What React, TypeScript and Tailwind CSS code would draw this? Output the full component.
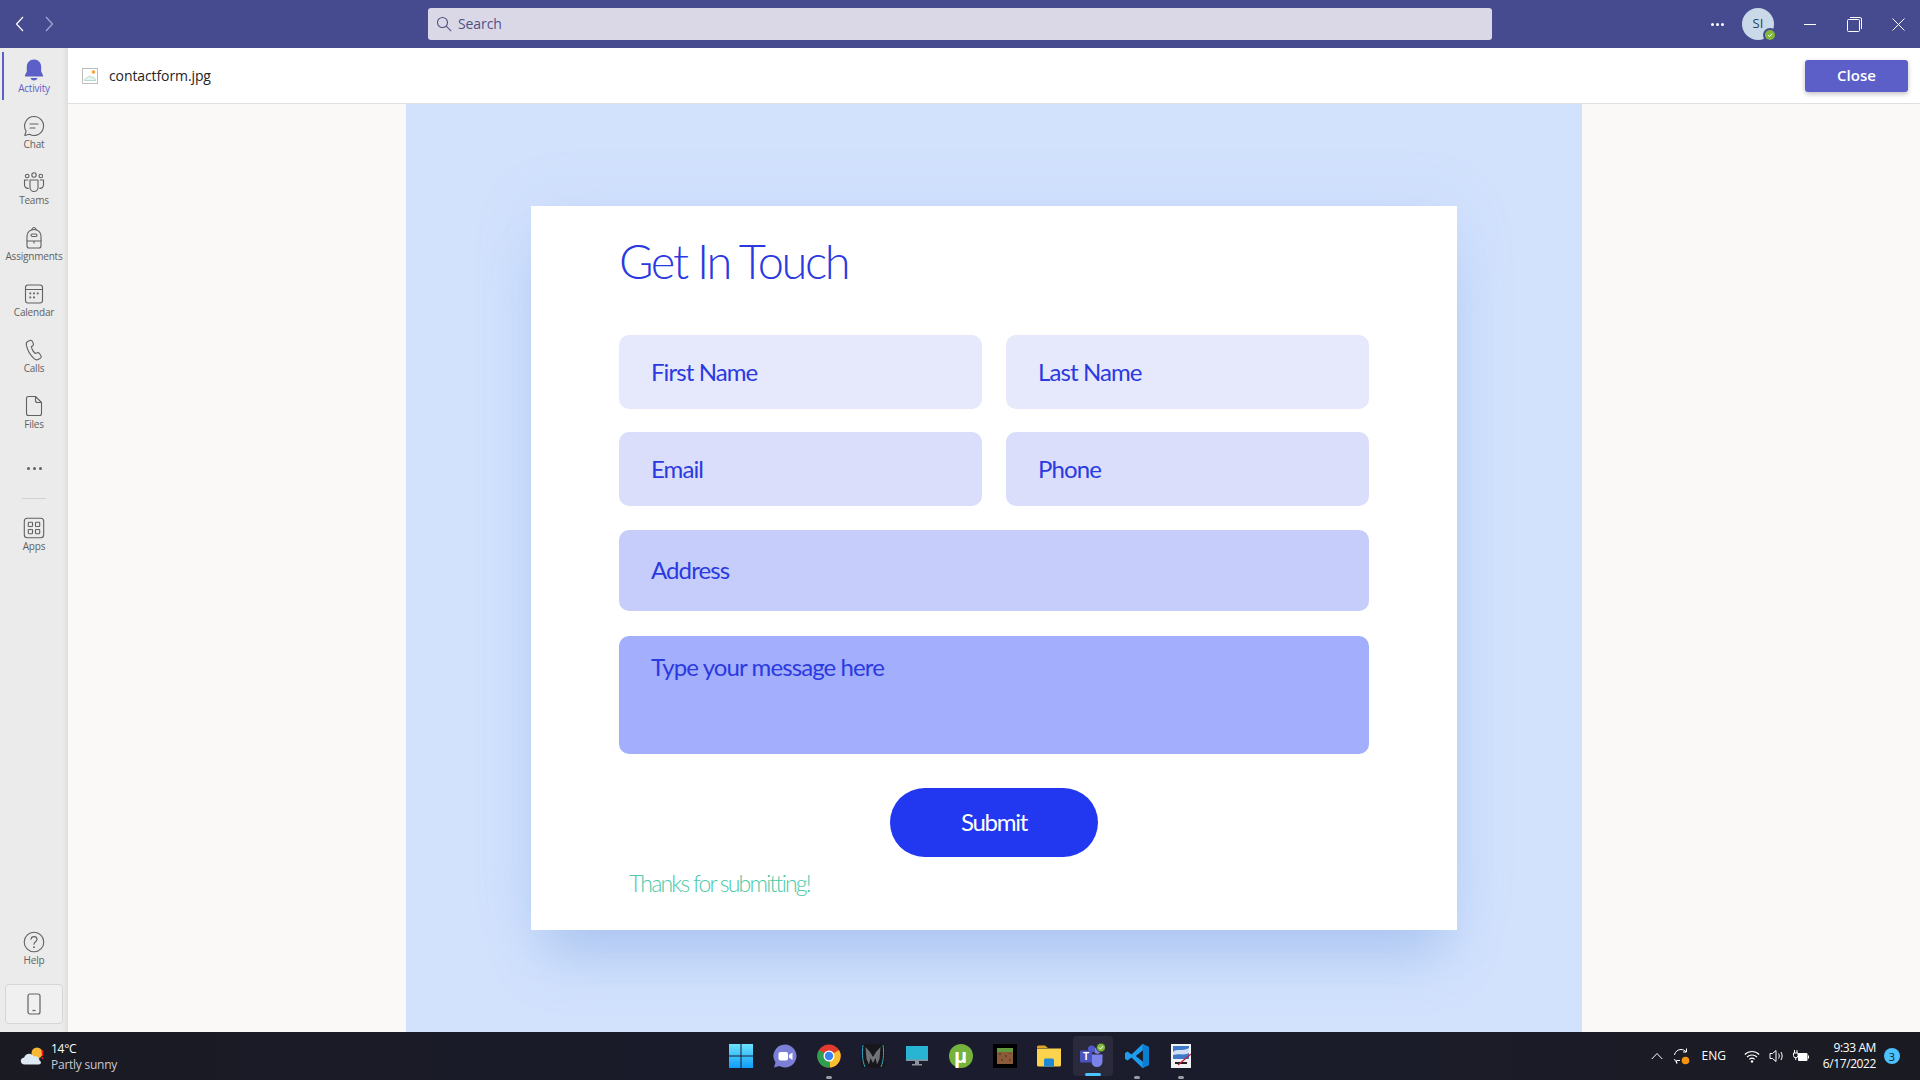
import { ReactNode } from "react";

const stroke = { fill: "none", stroke: "#616161", strokeWidth: 1.1, strokeLinecap: "round", strokeLinejoin: "round" } as const;

function Ico({ children, size = 24 }: { children: ReactNode; size?: number }) {
  return (
    <svg width={size} height={size} viewBox="0 0 24 24" className="block">
      {children}
    </svg>
  );
}

const railIcons: Record<string, ReactNode> = {
  Activity: (
    <Ico>
      <path d="M12 1.500c-4.400 0-7.200 3.400-7.200 7.400v4.600L3 17.200c-.3.700.1 1.300.9 1.300h16.200c.8 0 1.200-.6.900-1.300l-1.800-3.700V8.900c0-4-2.800-7.400-7.200-7.400Z" fill="#5b5fc7" />
      <path d="M8.500 20h7c-.3 1.500-1.700 2.500-3.500 2.500S8.800 21.500 8.500 20Z" fill="#5b5fc7" />
    </Ico>
  ),
  Chat: (
    <Ico>
      <path {...stroke} d="M12 2.500a9.500 9.500 0 1 1-4.600 17.800L2.800 21.500l1.300-4.400A9.500 9.500 0 0 1 12 2.500Z" />
      <path {...stroke} d="M8 10h8M8 14h5" />
    </Ico>
  ),
  Teams: (
    <Ico>
      <g {...stroke}>
        <circle cx="12" cy="5" r="2.200" />
        <circle cx="5.200" cy="6" r="1.800" />
        <circle cx="18.800" cy="6" r="1.800" />
        <path d="M8 10h8v7.500a4 4 0 0 1-8 0Z" />
        <path d="M5.800 10H2.500v5a3.500 3.500 0 0 0 3.800 3.400M18.200 10h3.300v5a3.500 3.500 0 0 1-3.800 3.400" />
      </g>
    </Ico>
  ),
  Assignments: (
    <Ico>
      <g {...stroke}>
        <path d="M9.800 3.800C10 2.500 11 1.500 12 1.500s2 1 2.200 2.300" />
        <path d="M5 10c0-3.800 3-6.500 7-6.500s7 2.700 7 6.500v10a2 2 0 0 1-2 2H7a2 2 0 0 1-2-2Z" />
        <path d="M5 15h14M12 15v2" />
        <rect x="9" y="8" width="6" height="2.500" rx="1.200" />
      </g>
    </Ico>
  ),
  Calendar: (
    <Ico>
      <rect {...stroke} x="3.500" y="3" width="17" height="18" rx="2.500" />
      <path {...stroke} d="M3.500 7.500h17" />
      <g fill="#616161">
        <rect x="7.400" y="10.500" width="1.800" height="1.800" />
        <rect x="11.100" y="10.500" width="1.800" height="1.800" />
        <rect x="14.800" y="10.500" width="1.800" height="1.800" />
        <rect x="7.400" y="14.500" width="1.800" height="1.800" />
        <rect x="11.100" y="14.500" width="1.800" height="1.800" />
      </g>
    </Ico>
  ),
  Calls: (
    <Ico>
      <path {...stroke} d="M7.800 2.600 5.700 3.500C4.300 4.200 4 5.600 4.400 7.300c1.100 4.800 4.100 10 7.700 13.300 1.300 1.200 2.700 1.600 4 .9l2.200-1.200c1-.6 1.200-1.700.6-2.600l-1.500-2.200c-.6-.8-1.500-1.100-2.400-.7l-1.800.7C11 13.500 9.800 11.300 9.300 8.800l1.400-1c.8-.6 1-1.500.6-2.400l-1-2.100c-.4-.9-1.500-1.200-2.500-.7Z" />
    </Ico>
  ),
  Files: (
    <Ico>
      <path {...stroke} d="M6.500 2.500h7l6 6v11a2 2 0 0 1-2 2h-11a2 2 0 0 1-2-2v-15a2 2 0 0 1 2-2Z" />
      <path {...stroke} d="M13.500 2.500v4a2 2 0 0 0 2 2h4" />
    </Ico>
  ),
  Apps: (
    <Ico>
      <rect {...stroke} x="2.300" y="2.300" width="19.400" height="19.400" rx="3" />
      <rect {...stroke} x="6.300" y="6.300" width="4.200" height="4.200" rx=".6" />
      <rect {...stroke} x="13.500" y="6.300" width="4.200" height="4.200" rx=".6" />
      <rect {...stroke} x="6.300" y="13.500" width="4.200" height="4.200" rx=".6" />
      <rect {...stroke} x="13.500" y="13.500" width="4.200" height="4.200" rx=".6" />
    </Ico>
  ),
  Help: (
    <Ico>
      <circle {...stroke} cx="12" cy="12" r="9.800" />
      <path {...stroke} d="M9 9.300c.2-1.700 1.400-2.700 3-2.700s3 1.100 3 2.700c0 2.400-3 2.500-3 5" />
      <circle cx="12" cy="17.200" r=".9" fill="#616161" />
    </Ico>
  ),
};

function RailItem({ label, active }: { label: string; active?: boolean }) {
  return (
    <div className="relative h-[48px] flex flex-col items-center">
      {active && <div className="absolute left-[2px] top-0 h-[48px] w-[2px] bg-[#5b5fc7]" />}
      <div className="mt-[6px] h-[24px]">{railIcons[label]}</div>
      <div className={`text-[10px] leading-[13px] tracking-[-0.2px] ${active ? "text-[#5b5fc7]" : "text-[#616161]"}`}>{label}</div>
    </div>
  );
}

function Rail() {
  return (
    <div className="w-[68px] shrink-0 flex flex-col items-stretch bg-[#ebebeb] pt-[4px] shadow-[inset_-5px_0_4px_-3px_rgba(0,0,0,0.07)]">
      <div className="flex flex-col gap-[8px]">
        <RailItem label="Activity" active />
        <RailItem label="Chat" />
        <RailItem label="Teams" />
        <RailItem label="Assignments" />
        <RailItem label="Calendar" />
        <RailItem label="Calls" />
        <RailItem label="Files" />
      </div>
      <div className="h-[56px] flex items-center justify-center gap-[3px] pt-[8px]">
        <span className="w-[3px] h-[3px] rounded-full bg-[#616161]" />
        <span className="w-[3px] h-[3px] rounded-full bg-[#616161]" />
        <span className="w-[3px] h-[3px] rounded-full bg-[#616161]" />
      </div>
      <div className="mx-auto mt-[6px] mb-[11px] w-[24px] h-px bg-[#d1d1d1]" />
      <RailItem label="Apps" />
      <div className="mt-auto">
        <RailItem label="Help" />
      </div>
      <div className="mx-[5px] mt-[12px] mb-[8px] h-[40px] rounded-[4px] border border-[#d6d6d6] bg-[#f0f0f0] flex items-center justify-center">
        <svg width="14" height="22" viewBox="0 0 14 22">
          <rect x="1" y="1" width="12" height="20" rx="2" fill="none" stroke="#616161" strokeWidth="1.200" />
          <path d="M5.500 17.500h3" stroke="#616161" strokeWidth="1.200" />
        </svg>
      </div>
    </div>
  );
}

function TitleBar() {
  return (
    <div className="h-[48px] shrink-0 bg-[#464a8f] flex items-center">
      <div className="w-[428px] flex items-center pl-[15px] gap-[19px]">
        <svg width="10" height="16" viewBox="0 0 10 16">
          <path d="M8 1 1.500 8 8 15" fill="none" stroke="#fff" strokeWidth="1.200" />
        </svg>
        <svg width="10" height="16" viewBox="0 0 10 16">
          <path d="M2 1 8.500 8 2 15" fill="none" stroke="#a6a8d2" strokeWidth="1.200" />
        </svg>
      </div>
      <div className="w-[1064px] h-[32px] rounded-[3px] bg-[#dad8e6] flex items-center pl-[8px] gap-[6px] text-[14px] leading-[30px] pb-[1px] text-[#505184] tracking-[-0.1px]">
        <svg width="16" height="16" viewBox="0 0 16 16">
          <circle cx="6.500" cy="6.500" r="5" fill="none" stroke="#505184" strokeWidth="1.100" />
          <path d="m10.200 10.200 5 5" stroke="#505184" strokeWidth="1.100" />
        </svg>
        <span>Search</span>
      </div>
      <div className="flex-1 flex items-center">
        <div className="ml-[219px] flex gap-[2px]">
          <span className="w-[3px] h-[3px] rounded-full bg-white" />
          <span className="w-[3px] h-[3px] rounded-full bg-white" />
          <span className="w-[3px] h-[3px] rounded-full bg-white" />
        </div>
        <div className="relative ml-[18px] w-[32px] h-[32px] rounded-full bg-[#c9d9e8] flex items-center justify-center text-[13px] font-medium text-[#24425f]">
          SI
          <div className="absolute right-[-3px] bottom-[-2px] w-[14px] h-[14px] rounded-full bg-[#83b93b] border-2 border-[#464a8f] flex items-center justify-center">
            <svg width="6" height="6" viewBox="0 0 6 6">
              <path d="m1 3 1.500 1.500L5 1.700" fill="none" stroke="#fff" strokeWidth="1" />
            </svg>
          </div>
        </div>
        <div className="ml-[30px] w-[12px] h-px bg-white" />
        <svg className="ml-[31px]" width="15" height="15" viewBox="0 0 15 15">
          <rect x=".5" y="2.500" width="12" height="12" rx="1" fill="none" stroke="#fff" />
          <path d="M3 .5h10a1.500 1.500 0 0 1 1.500 1.500v10" fill="none" stroke="#fff" />
        </svg>
        <svg className="ml-[30px]" width="13" height="13" viewBox="0 0 13 13">
          <path d="m.5.5 12 12m0-12-12 12" stroke="#fff" />
        </svg>
      </div>
    </div>
  );
}

function FileBar() {
  return (
    <div className="h-[56px] shrink-0 bg-white border-b border-[#e0e0e0] flex items-center pl-[14px] pr-[12px]">
      <svg width="16" height="16" viewBox="0 0 16 16">
        <rect x=".5" y=".5" width="15" height="15" fill="#fff" stroke="#bdbdbd" />
        <path d="M2.500 12.500c0-1.800 1.300-2.600 2.500-2.500.6-1.700 3.500-2.500 4.700-.7 1.700-.4 3.800.7 3.800 3.200Z" fill="#e5f2ed" stroke="#a9cfc3" strokeWidth=".8" />
        <circle cx="11.500" cy="4" r="1.800" fill="#f7a335" />
      </svg>
      <span className="ml-[11px] text-[14px] font-medium text-[#252424] tracking-[-0.1px]">contactform.jpg</span>
      <button className="ml-auto w-[103px] h-[32px] rounded-[3px] bg-[#5b5fc7] text-white text-[15px] font-semibold shadow-[0_2px_5px_rgba(0,0,0,0.25)]">
        Close
      </button>
    </div>
  );
}

function Field({ label, cls }: { label: string; cls: string }) {
  return (
    <div className={`rounded-[10px] flex pl-[32px] text-[24px] leading-none text-[#2b3ae0] tracking-[-0.9px] ${cls}`}>
      {label}
    </div>
  );
}

function ContactForm() {
  return (
    <div className="w-[1176px] h-full bg-[#d2e2fd] pt-[102px] overflow-hidden">
      <div className="mx-auto w-[926px] h-[724px] bg-white px-[88px] shadow-[0_40px_50px_-14px_rgba(120,160,225,0.38),0_0_60px_rgba(120,160,225,0.12)]">
        <div className="h-[129px] pt-[26px] text-[47px] leading-[58px] font-light text-[#2b3ae0] tracking-[-2.4px]">Get In Touch</div>
        <div className="grid grid-cols-[363px_363px] gap-x-[24px]">
          <Field label="First Name" cls="h-[74px] items-center bg-[#e6e8fc]" />
          <Field label="Last Name" cls="h-[74px] items-center bg-[#e6e8fc]" />
          <Field label="Email" cls="mt-[23px] h-[74px] items-center bg-[#dadefb]" />
          <Field label="Phone" cls="mt-[23px] h-[74px] items-center bg-[#dadefb]" />
          <Field label="Address" cls="col-span-2 mt-[24px] h-[81px] items-center pb-[2px] bg-[#c6cdfb]" />
          <Field label="Type your message here" cls="col-span-2 mt-[25px] h-[118px] pt-[19px] bg-[#a3aefc]" />
        </div>
        <div className="flex justify-center mt-[34px]">
          <button className="w-[208px] h-[69px] pb-[2px] rounded-full bg-[#2138f0] text-white text-[24px] tracking-[-1.3px]">Submit</button>
        </div>
        <div className="mt-[8px] pl-[10px] text-[23px] leading-[36px] font-light text-[#4cc9a6] tracking-[-1.8px]">Thanks for submitting!</div>
      </div>
    </div>
  );
}

function TaskIcon({ children, dot, active }: { children: ReactNode; dot?: boolean; active?: boolean }) {
  return (
    <div className="relative w-[44px] h-[48px] flex items-center justify-center">
      {active && <div className="absolute left-[2px] top-[4px] w-[40px] h-[40px] rounded-[4px] bg-[#2a2a3c]" />}
      <div className="relative">{children}</div>
      {dot && <div className="absolute bottom-[1px] left-1/2 -translate-x-1/2 w-[6px] h-[3px] rounded-full bg-[#9a9aa2]" />}
      {active && <div className="absolute bottom-[4px] left-1/2 -translate-x-1/2 w-[16px] h-[3px] rounded-full bg-[#4cc2ff]" />}
    </div>
  );
}

function Taskbar() {
  return (
    <div className="h-[48px] shrink-0 bg-linear-to-r from-[#191a22] via-[#1b1c2e] to-[#1a1b22] grid grid-cols-[1fr_auto_1fr] items-center text-white">
      <div className="flex items-center pl-[20px] gap-[7px]">
        <svg width="24" height="20" viewBox="0 0 24 20">
          <circle cx="17" cy="7" r="5.500" fill="#f7b733" />
          <path d="M21.500 4h2l-.5 6h-1Z" fill="#e81123" />
          <circle cx="22.300" cy="12" r="1" fill="#e81123" />
          <path d="M5 18.500c-5.500 0-5.500-6.500-.8-7 .9-4 7.300-5.300 9.500-1 3-.9 5.800 1 5.800 4 2.500 1.300 1.500 4-1 4Z" fill="#dfe9f5" />
        </svg>
        <div className="text-[12px] leading-[16px] tracking-[-0.25px] pt-[2px]">
          <div>14°C</div>
          <div className="text-[#c9c9cf]">Partly sunny</div>
        </div>
      </div>
      <div className="flex items-center pl-[1px]">
        <TaskIcon>
          <svg width="24" height="24" viewBox="0 0 24 24" className="block">
            <defs>
              <linearGradient id="win" x1="0" y1="0" x2="0" y2="1">
                <stop offset="0" stopColor="#6be3fc" />
                <stop offset="1" stopColor="#0f9dfb" />
              </linearGradient>
            </defs>
            <path d="M0 0h11.500v11.500H0ZM12.500 0H24v11.500H12.500ZM0 12.500h11.500V24H0ZM12.500 12.500H24V24H12.500Z" fill="url(#win)" />
          </svg>
        </TaskIcon>
        <TaskIcon>
          <svg width="24" height="24" viewBox="0 0 24 24" className="block">
            <path d="M12 .5a11.500 11.500 0 1 1-5.500 21.600L1 23.500l1.500-5A11.500 11.500 0 0 1 12 .5Z" fill="#7b7fd6" />
            <rect x="5.500" y="8" width="9.500" height="8.500" rx="2" fill="#fff" />
            <path d="m16 11 3.500-2.500v7.500L16 13.500Z" fill="#fff" />
          </svg>
        </TaskIcon>
        <TaskIcon dot>
          <svg width="24" height="24" viewBox="0 0 24 24" className="block">
            <circle cx="12" cy="12" r="11.500" fill="#e33b2e" />
            <path d="M12 12 22 6a11.500 11.500 0 0 1-9 17.500Z" fill="#fbc02d" />
            <path d="M12 12 13 23.500A11.500 11.500 0 0 1 2 6Z" fill="#2e9e4f" />
            <circle cx="12" cy="12" r="5.500" fill="#fff" />
            <circle cx="12" cy="12" r="4.200" fill="#3b82f1" />
          </svg>
        </TaskIcon>
        <TaskIcon>
          <svg width="24" height="24" viewBox="0 0 24 24" className="block">
            <rect width="24" height="24" rx="3" fill="#17171b" />
            <path d="M2 1c-1 6-1 15 2 22M22 1c1 6 1 15-2 22" fill="none" stroke="#2fa9c9" strokeWidth="1" />
            <path d="M4.500 3 9 8l3 5 3-5 4.500-5-1 12-2.500 5.500-1.500-6.500-2.500 5-2.500-5-1.500 6.500L5.500 15Z" fill="#6f7278" />
          </svg>
        </TaskIcon>
        <TaskIcon>
          <svg width="22" height="20" viewBox="0 0 22 20" className="block">
            <rect width="22" height="15" fill="#28b4d3" />
            <rect y="13.500" width="22" height="1.500" fill="#8a9499" />
            <rect x="9" y="15" width="4" height="3" fill="#8a9499" />
            <rect x="6" y="18" width="10" height="1.500" fill="#8a9499" />
          </svg>
        </TaskIcon>
        <TaskIcon>
          <div className="w-[24px] h-[24px] rounded-full bg-[#75b33c] flex items-center justify-center text-white text-[20px] leading-[24px] font-bold">µ</div>
        </TaskIcon>
        <TaskIcon>
          <svg width="24" height="24" viewBox="0 0 24 24" className="block">
            <rect width="24" height="24" fill="#000" />
            <rect x="4" y="4" width="16" height="16" fill="#8a5a3a" />
            <rect x="4" y="4" width="16" height="4" fill="#5f9a3c" />
            <path d="M6 9h2v2H6ZM12 11h2v2h-2ZM8 15h2v2H8ZM16 15h2v2h-2ZM16 9h2v1h-2Z" fill="#6b4226" />
          </svg>
        </TaskIcon>
        <TaskIcon>
          <svg width="24" height="22" viewBox="0 0 24 22" className="block">
            <path d="M0 2a1.500 1.500 0 0 1 1.500-1.500h6.500L11 3h-11Z" fill="#e0a526" />
            <path d="M0 3.500h24V20a1.500 1.500 0 0 1-1.500 1.500h-21A1.500 1.500 0 0 1 0 20Z" fill="#fcd34d" />
            <path d="M7 15a1.500 1.500 0 0 1 1.500-1.500h7A1.500 1.500 0 0 1 17 15v6.500H7Z" fill="#1e88d6" />
          </svg>
        </TaskIcon>
        <TaskIcon active>
          <svg width="26" height="26" viewBox="0 0 26 26" className="block">
            <circle cx="17.500" cy="7.500" r="3.200" fill="#7b83eb" />
            <path d="M11 11.500h11.500v7a5.500 5.500 0 0 1-11 0Z" fill="#7b83eb" />
            <circle cx="11.500" cy="6" r="3.500" fill="#5059c9" />
            <rect x="0" y="7.500" width="12" height="12" rx="1" fill="#4b53bc" />
            <text x="6" y="17" textAnchor="middle" fontSize="10" fontWeight="700" fill="#fff" fontFamily="Liberation Sans, sans-serif">T</text>
            <circle cx="21" cy="4.500" r="4.500" fill="#83b93b" stroke="#2a2a3c" />
            <path d="m19 4.500 1.500 1.500 2.500-3" fill="none" stroke="#fff" strokeWidth="1" />
          </svg>
        </TaskIcon>
        <TaskIcon dot>
          <svg width="24" height="24" viewBox="0 0 24 24" className="block">
            <path d="M17.500 0 24 3v18l-6.500 3L6.500 13.500 2.500 16.500 0 15V9l2.500-1.500 4 3Zm.5 6.500L11 12l7 5.500Z" fill="#1f9cf0" />
            <path d="M17.500 0 24 3v18l-6.500 3Z" fill="#0b7fd0" />
            <path d="M18 6.500 11 12l7 5.500Z" fill="#1b1c2c" />
          </svg>
        </TaskIcon>
        <TaskIcon dot>
          <svg width="20" height="24" viewBox="0 0 20 24" className="block">
            <rect width="20" height="24" fill="#f2f2f2" />
            <rect x="2" y="2" width="16" height="13" fill="#3f79c9" />
            <path d="M2 8c4-4 8 0 16-4v5c-6 3-10 0-16 2Z" fill="#cfe0f5" />
            <path d="M4 19h12" stroke="#222" strokeWidth="2" />
            <path d="m7 21 13-11" stroke="#c2203a" strokeWidth="1.300" />
          </svg>
        </TaskIcon>
      </div>
      <div className="flex items-center justify-end text-[12px]">
        <svg width="12" height="8" viewBox="0 0 12 8">
          <path d="M.8 7 6 1.500 11.200 7" fill="none" stroke="#fff" strokeWidth="1" />
        </svg>
        <svg className="ml-[10px]" width="17" height="17" viewBox="0 0 17 17">
          <path d="M1.500 7C2 3.500 5 1.500 8 1.500c2 0 3.700.8 5 2.300M13.500.5v3.500H10M3.500 12.500v3M3.500 12.500H7M1.500 11c.6 1.500 1.500 3 3 4" fill="none" stroke="#fff" strokeWidth="1" />
          <circle cx="12.500" cy="12.500" r="3.800" fill="#f7930e" />
        </svg>
        <span className="ml-[9px] w-[30px] text-center">ENG</span>
        <svg className="ml-[15px]" width="16" height="13" viewBox="0 0 16 13">
          <path d="M.8 4.500c4-4 10.400-4 14.400 0M3 7c2.800-2.700 7.200-2.700 10 0M5.300 9.300c1.500-1.300 3.900-1.300 5.400 0" fill="none" stroke="#fff" strokeWidth="1.100" />
          <circle cx="8" cy="11.500" r="1.200" fill="#fff" />
        </svg>
        <svg className="ml-[9px]" width="16" height="14" viewBox="0 0 16 14">
          <path d="M1 4.500h2.500L7 1.500v11l-3.500-3H1Z" fill="none" stroke="#fff" strokeWidth="1" />
          <path d="M9.500 4.500c1 1.500 1 3.500 0 5M12 3c1.500 2.500 1.500 5.500 0 8" fill="none" stroke="#fff" strokeWidth="1" />
        </svg>
        <svg className="ml-[8px]" width="16" height="13" viewBox="0 0 16 13">
          <path d="M1.500 0v3M4 0v3M.5 3h4.500v2.500a2.200 2.200 0 0 1-4.500 0ZM2.700 7.500V10" stroke="#fff" fill="none" strokeWidth="1" />
          <rect x="5" y="3" width="9.500" height="8" rx="1" fill="#fff" />
          <rect x="15" y="5.500" width="1" height="3" fill="#fff" />
        </svg>
        <div className="ml-[14px] text-right leading-[16px] tracking-[-0.4px]">
          <div>9:33 AM</div>
          <div>6/17/2022</div>
        </div>
        <div className="ml-[8px] mr-[20px] w-[16px] h-[16px] rounded-full bg-[#4cc2ff] text-[#10202c] text-[11px] leading-none flex items-center justify-center">3</div>
      </div>
    </div>
  );
}

export default function App() {
  return (
    <div className="w-[1920px] h-[1080px] flex flex-col overflow-hidden font-['Open_Sans',sans-serif]">
      <TitleBar />
      <div className="flex-1 flex min-h-0">
        <Rail />
        <div className="flex-1 flex flex-col min-w-0">
          <FileBar />
          <div className="flex-1 min-h-0 bg-[#faf9f8] flex justify-center">
            <div className="font-['Lato',sans-serif] h-full">
              <ContactForm />
            </div>
          </div>
        </div>
      </div>
      <Taskbar />
    </div>
  );
}
